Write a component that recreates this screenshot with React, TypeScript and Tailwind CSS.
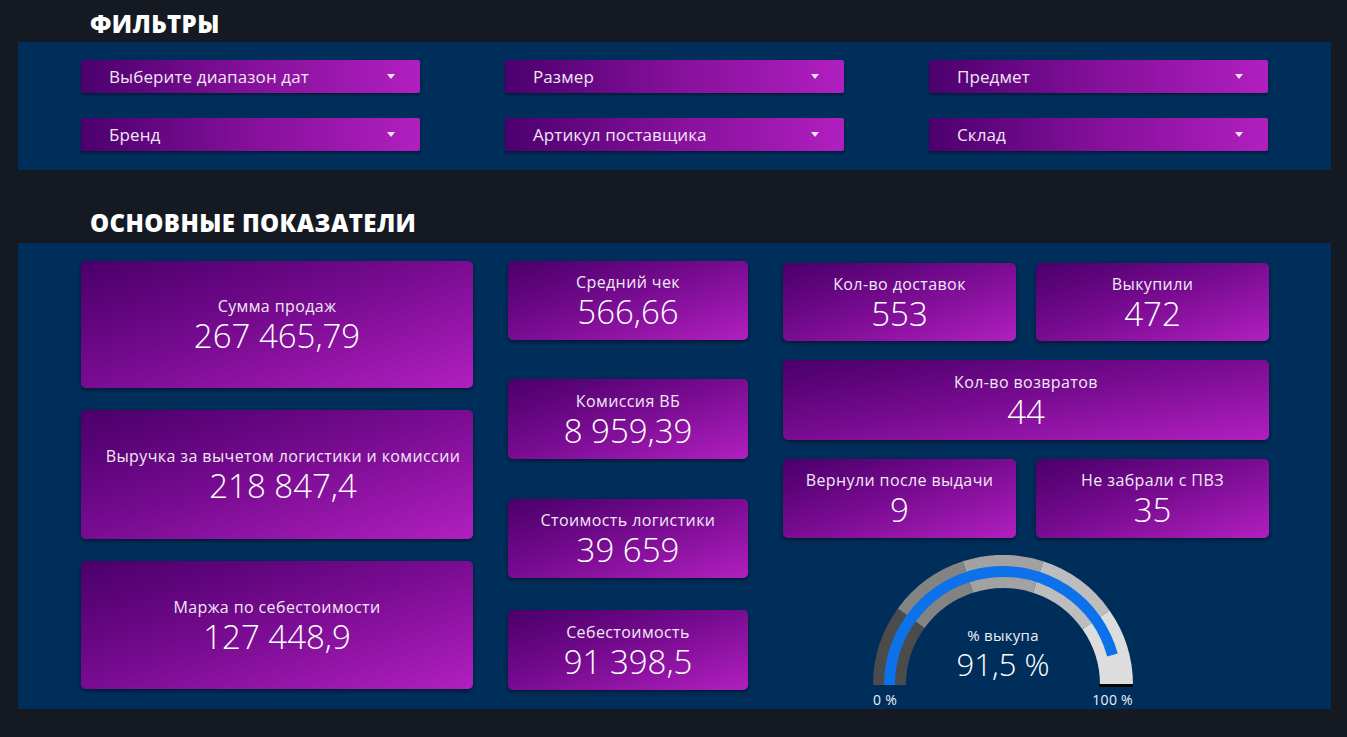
const filters = [
  "Выберите диапазон дат",
  "Размер",
  "Предмет",
  "Бренд",
  "Артикул поставщика",
  "Склад",
];

const cardBg =
  "bg-linear-to-br from-[#4a006a] via-[#7a0c92] to-[#b21fc0] shadow-[0_2px_4px_rgba(0,0,0,0.45)]";

function Caret() {
  return (
    <svg width="8" height="5" viewBox="0 0 8 5" className="shrink-0">
      <path d="M0 0h8L4 5z" fill="#f3e8f6" />
    </svg>
  );
}

function FilterSelect({ label }: { label: string }) {
  return (
    <div className="flex h-[33px] items-center justify-between rounded-[2px] bg-linear-to-r from-[#4c006e] via-[#85109a] to-[#b11fc0] pl-[28px] pr-[25px] shadow-[0_2px_3px_rgba(0,0,0,0.4)]">
      <span className="text-[17px] tracking-[0.1px] text-[#f1e6f4]">{label}</span>
      <Caret />
    </div>
  );
}

function Metric({
  label,
  value,
  className,
}: {
  label: string;
  value: string;
  className?: string;
}) {
  return (
    <div
      className={`flex flex-col items-center justify-center gap-[3px] rounded-[5px] text-center ${cardBg} ${className ?? ""}`}
    >
      <div className="whitespace-nowrap text-[16px] leading-[20px] tracking-[0.4px] text-[#f1e8f4]">
        {label}
      </div>
      <div className="whitespace-nowrap text-[33px] leading-[34px] font-light text-white">
        {value}
      </div>
    </div>
  );
}

// annular sector, angles in degrees measured from the left end over the top
function sector(cx: number, cy: number, r0: number, r1: number, a0: number, a1: number) {
  const pt = (r: number, a: number) => {
    const t = (a * Math.PI) / 180;
    return [cx - r * Math.cos(t), cy - r * Math.sin(t)];
  };
  const [x0, y0] = pt(r1, a0);
  const [x1, y1] = pt(r1, a1);
  const [x2, y2] = pt(r0, a1);
  const [x3, y3] = pt(r0, a0);
  const large = a1 - a0 > 180 ? 1 : 0;
  return `M${x0} ${y0}A${r1} ${r1} 0 ${large} 1 ${x1} ${y1}L${x2} ${y2}A${r0} ${r0} 0 ${large} 0 ${x3} ${y3}Z`;
}

function arc(cx: number, cy: number, r: number, a0: number, a1: number) {
  const t0 = (a0 * Math.PI) / 180;
  const t1 = (a1 * Math.PI) / 180;
  return `M${cx - r * Math.cos(t0)} ${cy - r * Math.sin(t0)}A${r} ${r} 0 0 1 ${cx - r * Math.cos(t1)} ${cy - r * Math.sin(t1)}`;
}

const bands = [
  { from: 0, to: 36, color: "#4b4b4b" },
  { from: 36, to: 72, color: "#838383" },
  { from: 72, to: 108, color: "#a2a2a2" },
  { from: 108, to: 145, color: "#bdbdbd" },
  { from: 145, to: 180, color: "#dddddd" },
];

function Gauge({ percent }: { percent: number }) {
  const end = (percent / 100) * 180;
  return (
    <div className="w-[260px]">
      <div className="relative h-[132px] w-[260px]">
        <svg width="260" height="132" viewBox="0 0 260 132" className="absolute inset-0">
          {bands.map((b) => (
            <path key={b.from} d={sector(130, 130, 97, 130, b.from, b.to)} fill={b.color} />
          ))}
          <path d={arc(130, 130, 113.5, 0, end)} stroke="#0d72ea" strokeWidth="11" fill="none" />
          <rect x="226" y="129" width="34" height="3" fill="#050505" />
        </svg>
        <div className="absolute inset-x-0 top-[70px] flex flex-col items-center gap-[2px]">
          <div className="text-[15px] leading-[20px] tracking-[0.3px] text-[#eef0f5]">% выкупа</div>
          <div className="text-[31px] leading-[34px] font-light text-white">91,5 %</div>
        </div>
      </div>
      <div className="mt-[4px] flex justify-between text-[14px] leading-[18px] tracking-[0.3px] text-[#eef0f5]">
        <span>0 %</span>
        <span>100 %</span>
      </div>
    </div>
  );
}

export default function App() {
  return (
    <div
      className="min-h-[737px] w-[1347px] bg-[#151a22] text-white"
      style={{ fontFamily: '"Open Sans", "Noto Sans", sans-serif' }}
    >
      <h2 className="flex h-[42px] items-center pl-[90px] pt-[5px] text-[24px] font-extrabold tracking-[0.4px]">
        ФИЛЬТРЫ
      </h2>

      <section className="ml-[18px] w-[1313px] bg-[#002e5b] px-[63px] pb-[19px] pt-[18px]">
        <div className="grid grid-cols-3 gap-x-[85px] gap-y-[25px]">
          {filters.map((f) => (
            <FilterSelect key={f} label={f} />
          ))}
        </div>
      </section>

      <h2 className="flex h-[73px] items-center pl-[90px] pt-[33px] text-[24px] font-extrabold tracking-[0.4px]">
        ОСНОВНЫЕ ПОКАЗАТЕЛИ
      </h2>

      <section className="ml-[18px] flex h-[466px] w-[1313px] gap-[35px] bg-[#002e5b] pl-[63px] pt-[18px]">
        <div className="flex w-[392px] flex-col gap-[22px]">
          <Metric label="Сумма продаж" value="267 465,79" className="h-[127px]" />
          <Metric
            label="Выручка за вычетом логистики и комиссии"
            value="218 847,4"
            className="h-[129px] pl-[12px]"
          />
          <Metric label="Маржа по себестоимости" value="127 448,9" className="h-[128px]" />
        </div>

        <div className="flex w-[240px] flex-col">
          <Metric label="Средний чек" value="566,66" className="h-[79px]" />
          <Metric label="Комиссия ВБ" value="8 959,39" className="mt-[39px] h-[80px]" />
          <Metric label="Стоимость логистики" value="39 659" className="mt-[40px] h-[79px]" />
          <Metric label="Себестоимость" value="91 398,5" className="mt-[32px] h-[80px]" />
        </div>

        <div className="flex w-[486px] flex-col pt-[2px]">
          <div className="grid grid-cols-2 gap-x-[20px] gap-y-[19px]">
            <Metric label="Кол-во доставок" value="553" className="h-[78px]" />
            <Metric label="Выкупили" value="472" className="h-[78px]" />
            <Metric label="Кол-во возвратов" value="44" className="col-span-2 h-[80px]" />
            <Metric label="Вернули после выдачи" value="9" className="h-[79px]" />
            <Metric label="Не забрали с ПВЗ" value="35" className="h-[79px]" />
          </div>
          <div className="mt-[17px] pl-[90px]">
            <Gauge percent={91.5} />
          </div>
        </div>
      </section>
    </div>
  );
}
